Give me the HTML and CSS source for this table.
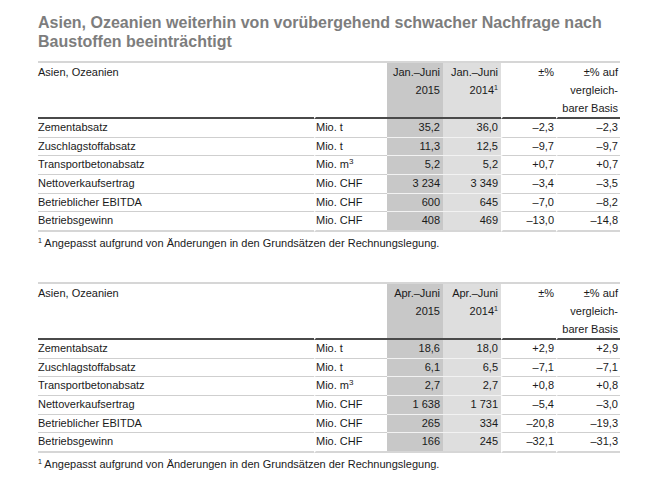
FILE: index.html
```html
<!DOCTYPE html>
<html lang="de">
<head>
<meta charset="utf-8">
<link rel="stylesheet" href="styles.css">
</head>
<body>
<div class="page">
  <h1 class="title">Asien, Ozeanien weiterhin von vorübergehend schwacher Nachfrage nach Baustoffen beeinträchtigt</h1>

  <table class="kpi">
    <thead>
      <tr>
        <th class="lbl">Asien, Ozeanien</th>
        <th class="u"></th>
        <th class="c1">Jan.–Juni<br>2015</th>
        <th class="c2">Jan.–Juni<br>2014<sup>1</sup></th>
        <th class="c3">±%</th>
        <th class="c4">±% auf<br>vergleich-<br>barer Basis</th>
      </tr>
    </thead>
    <tbody>
      <tr><td class="lbl">Zementabsatz</td><td class="u">Mio. t</td><td class="c1">35,2</td><td class="c2">36,0</td><td class="c3">–2,3</td><td class="c4">–2,3</td></tr>
      <tr><td class="lbl">Zuschlagstoffabsatz</td><td class="u">Mio. t</td><td class="c1">11,3</td><td class="c2">12,5</td><td class="c3">–9,7</td><td class="c4">–9,7</td></tr>
      <tr><td class="lbl">Transportbetonabsatz</td><td class="u">Mio. m<sup class="sq">3</sup></td><td class="c1">5,2</td><td class="c2">5,2</td><td class="c3">+0,7</td><td class="c4">+0,7</td></tr>
      <tr><td class="lbl">Nettoverkaufsertrag</td><td class="u">Mio. CHF</td><td class="c1">3 234</td><td class="c2">3 349</td><td class="c3">–3,4</td><td class="c4">–3,5</td></tr>
      <tr><td class="lbl">Betrieblicher EBITDA</td><td class="u">Mio. CHF</td><td class="c1">600</td><td class="c2">645</td><td class="c3">–7,0</td><td class="c4">–8,2</td></tr>
      <tr class="last"><td class="lbl">Betriebsgewinn</td><td class="u">Mio. CHF</td><td class="c1">408</td><td class="c2">469</td><td class="c3">–13,0</td><td class="c4">–14,8</td></tr>
    </tbody>
  </table>
  <p class="note"><sup>1</sup> Angepasst aufgrund von Änderungen in den Grundsätzen der Rechnungslegung.</p>

  <table class="kpi second">
    <thead>
      <tr>
        <th class="lbl">Asien, Ozeanien</th>
        <th class="u"></th>
        <th class="c1">Apr.–Juni<br>2015</th>
        <th class="c2">Apr.–Juni<br>2014<sup>1</sup></th>
        <th class="c3">±%</th>
        <th class="c4">±% auf<br>vergleich-<br>barer Basis</th>
      </tr>
    </thead>
    <tbody>
      <tr><td class="lbl">Zementabsatz</td><td class="u">Mio. t</td><td class="c1">18,6</td><td class="c2">18,0</td><td class="c3">+2,9</td><td class="c4">+2,9</td></tr>
      <tr><td class="lbl">Zuschlagstoffabsatz</td><td class="u">Mio. t</td><td class="c1">6,1</td><td class="c2">6,5</td><td class="c3">–7,1</td><td class="c4">–7,1</td></tr>
      <tr><td class="lbl">Transportbetonabsatz</td><td class="u">Mio. m<sup class="sq">3</sup></td><td class="c1">2,7</td><td class="c2">2,7</td><td class="c3">+0,8</td><td class="c4">+0,8</td></tr>
      <tr><td class="lbl">Nettoverkaufsertrag</td><td class="u">Mio. CHF</td><td class="c1">1 638</td><td class="c2">1 731</td><td class="c3">–5,4</td><td class="c4">–3,0</td></tr>
      <tr><td class="lbl">Betrieblicher EBITDA</td><td class="u">Mio. CHF</td><td class="c1">265</td><td class="c2">334</td><td class="c3">–20,8</td><td class="c4">–19,3</td></tr>
      <tr class="last"><td class="lbl">Betriebsgewinn</td><td class="u">Mio. CHF</td><td class="c1">166</td><td class="c2">245</td><td class="c3">–32,1</td><td class="c4">–31,3</td></tr>
    </tbody>
  </table>
  <p class="note"><sup>1</sup> Angepasst aufgrund von Änderungen in den Grundsätzen der Rechnungslegung.</p>
</div>
</body>
</html>
```

FILE: styles.css
```css
html, body {
  margin: 0;
  padding: 0;
  background: #fff;
}

.page {
  padding: 13px 0 0 38px;
  width: 584px;
  font-family: "Liberation Sans", Arial, sans-serif;
  color: #1a1a1a;
}

.title {
  margin: 0 0 10px 0;
  font-size: 16px;
  line-height: 19px;
  font-weight: bold;
  color: #7d7d7d;
  width: 600px;
}

.kpi {
  width: 582px;
  border-collapse: separate;
  border-spacing: 0;
  border-top: 2px solid #d6d6d6;
  font-size: 11px;
}

.kpi th,
.kpi td {
  padding: 0;
  text-align: right;
  vertical-align: top;
  font-weight: normal;
}

.kpi th {
  line-height: 18px;
  border-bottom: 2px solid #4a4a4a;
}

.kpi td {
  line-height: 17.67px;
  border-bottom: 1px solid #cfcfcf;
}

.kpi .lbl {
  text-align: left;
  width: 276px;
}

.kpi .u {
  text-align: left;
  width: 71px;
  border-left: 2px solid #fff;
}

.kpi .c1 {
  width: 53px;
  padding-right: 3px;
  background: #c8c8c8;
}

.kpi .c2 {
  width: 55px;
  padding-right: 3px;
  background: #dedede;
}

.kpi td.c1,
.kpi td.c2 {
  border-bottom-color: #f2f2f2;
}

.kpi .c3 {
  width: 51px;
  padding-right: 2px;
  border-left: 2px solid #fff;
}

.kpi .c4 {
  width: 60px;
  padding-right: 2px;
  border-left: 2px solid #fff;
}

.kpi tr.last td {
  border-bottom: 2px solid #d6d6d6;
}

.kpi tr.last td.c1,
.kpi tr.last td.c2 {
  border-bottom-color: #d6d6d6;
}

.kpi sup {
  font-size: 7px;
  line-height: 0;
  vertical-align: 4px;
}

.kpi sup.sq {
  font-size: 8px;
}

.note {
  margin: 3px 0 0 0;
  font-size: 11px;
  line-height: 16px;
}

.note sup {
  font-size: 7px;
  line-height: 0;
  vertical-align: 4px;
}

.second {
  margin-top: 31px;
}
```
